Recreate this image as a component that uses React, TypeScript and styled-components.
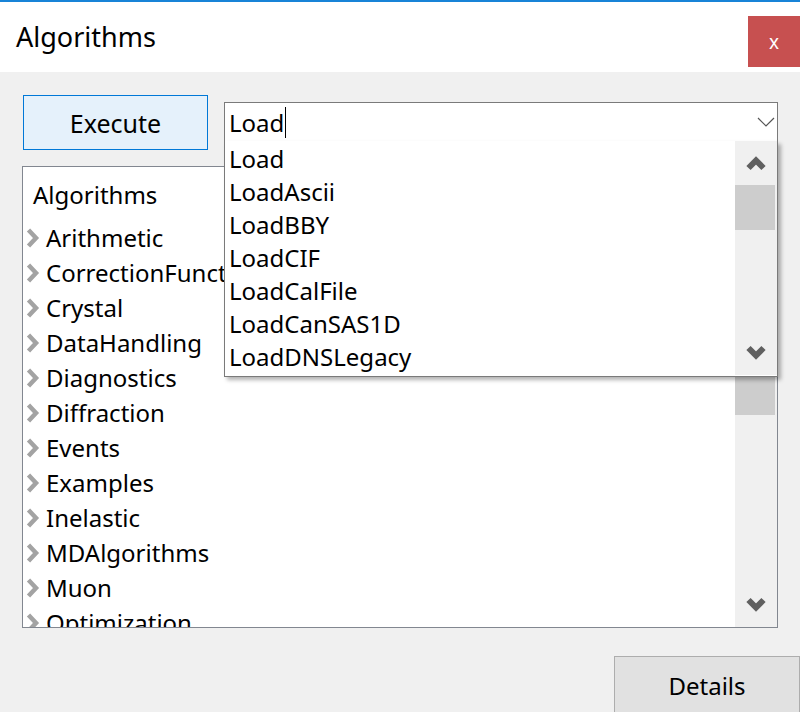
import React from "react";
import styled, { createGlobalStyle } from "styled-components";

const GlobalStyle = createGlobalStyle`
  html, body {
    margin: 0;
    padding: 0;
    background: #f0f0f0;
    font-family: "Noto Sans", "Open Sans", sans-serif;
    color: #000;
    overflow: hidden;
  }
`;

const Window = styled.div`
  width: 800px;
  height: 712px;
  display: flex;
  flex-direction: column;
  border-top: 2px solid #1883d7;
  box-sizing: border-box;
  overflow: hidden;
`;

const TitleBar = styled.div`
  height: 70px;
  background: #fff;
  display: flex;
  align-items: flex-start;
  justify-content: space-between;
  flex-shrink: 0;
`;

const Title = styled.div`
  font-size: 27px;
  padding: 16px 0 0 16px;
  line-height: 38px;
`;

const CloseButton = styled.div`
  width: 52px;
  height: 51px;
  margin-top: 14px;
  background: #c75050;
  color: #fff;
  font-size: 19px;
  display: flex;
  align-items: center;
  justify-content: center;
`;

const Body = styled.div`
  padding: 23px 22px 0 22px;
  display: flex;
  flex-direction: column;
`;

const TopRow = styled.div`
  display: flex;
  align-items: flex-start;
  gap: 16px;
  padding-left: 1px;
`;

const ExecuteButton = styled.div`
  width: 185px;
  height: 55px;
  box-sizing: border-box;
  background: #e5f1fb;
  border: 1px solid #0078d7;
  font-size: 25px;
  display: flex;
  align-items: center;
  justify-content: center;
`;

const Combo = styled.div`
  position: relative;
  margin-top: 7px;
  width: 554px;
  height: 40px;
  box-sizing: border-box;
  background: #fff;
  border: 1px solid #7a7a7a;
  display: flex;
  align-items: center;
  padding: 0 0 0 4px;
  font-size: 24px;
`;

const ComboText = styled.span`
  flex: 1;
  display: flex;
  align-items: center;
`;

const Caret = styled.span`
  display: inline-block;
  width: 1px;
  height: 31px;
  background: #000;
  margin-left: 1px;
`;

const ComboArrow = styled.svg`
  margin-right: 2px;
`;

const Popup = styled.div`
  position: absolute;
  top: 38px;
  left: -1px;
  width: 554px;
  height: 236px;
  box-sizing: border-box;
  background: #fff;
  border: 1px solid #7a7a7a;
  border-top: none;
  box-shadow: 3px 3px 4px rgba(0, 0, 0, 0.3);
  display: flex;
  z-index: 5;
`;

const PopupList = styled.div`
  flex: 1;
  padding-top: 1px;
`;

const PopupItem = styled.div`
  height: 33px;
  line-height: 33px;
  padding-left: 4px;
  font-size: 24px;
  white-space: nowrap;
`;

const ScrollBar = styled.div<{ $h: number }>`
  width: 42px;
  height: ${(p) => p.$h}px;
  background: #f0f0f0;
  display: flex;
  flex-direction: column;
  align-items: stretch;
  flex-shrink: 0;
`;

const ScrollArrow = styled.div`
  height: 44px;
  display: flex;
  align-items: center;
  justify-content: center;
  flex-shrink: 0;
`;

const Thumb = styled.div<{ $h: number }>`
  height: ${(p) => p.$h}px;
  background: #cdcdcd;
  margin-right: 2px;
`;

const Track = styled.div`
  flex: 1;
`;

const TreePanel = styled.div`
  margin-top: 16px;
  width: 756px;
  height: 462px;
  box-sizing: border-box;
  background: #fff;
  border: 1px solid #828790;
  display: flex;
  overflow: hidden;
`;

const TreeList = styled.div`
  flex: 1;
  padding-top: 10px;
`;

const TreeHeader = styled.div`
  height: 35px;
  line-height: 35px;
  padding-left: 10px;
  font-size: 24px;
  margin-bottom: 8px;
`;

const TreeRow = styled.div`
  height: 35px;
  display: flex;
  align-items: center;
  gap: 6px;
  padding-left: 2px;
  font-size: 24px;
  white-space: nowrap;
`;

const Footer = styled.div`
  display: flex;
  justify-content: flex-end;
  margin-top: 28px;
  margin-right: -22px;
`;

const DetailsButton = styled.div`
  width: 186px;
  height: 58px;
  box-sizing: border-box;
  background: #e1e1e1;
  border: 1px solid #adadad;
  font-size: 24px;
  display: flex;
  align-items: center;
  justify-content: center;
`;

const UpIcon = () => (
  <svg width="20" height="16" viewBox="0 0 20 16">
    <polyline points="2.5,13 10,5.5 17.5,13" fill="none" stroke="#606060" strokeWidth="6" />
  </svg>
);

const DownIcon = () => (
  <svg width="20" height="16" viewBox="0 0 20 16">
    <polyline points="2.5,3 10,10.5 17.5,3" fill="none" stroke="#606060" strokeWidth="6" />
  </svg>
);

const Chevron = () => (
  <svg width="15" height="20" viewBox="0 0 15 20">
    <polyline points="3.5,2 11,10 3.5,18" fill="none" stroke="#a3a3a3" strokeWidth="4.5" />
  </svg>
);

const matches = [
  "Load",
  "LoadAscii",
  "LoadBBY",
  "LoadCIF",
  "LoadCalFile",
  "LoadCanSAS1D",
  "LoadDNSLegacy",
];

const categories = [
  "Arithmetic",
  "CorrectionFunctions",
  "Crystal",
  "DataHandling",
  "Diagnostics",
  "Diffraction",
  "Events",
  "Examples",
  "Inelastic",
  "MDAlgorithms",
  "Muon",
  "Optimization",
];

export default function App() {
  return (
    <>
      <GlobalStyle />
      <Window>
        <TitleBar>
          <Title>Algorithms</Title>
          <CloseButton>x</CloseButton>
        </TitleBar>
        <Body>
          <TopRow>
            <ExecuteButton>Execute</ExecuteButton>
            <Combo>
              <ComboText>
                Load
                <Caret />
              </ComboText>
              <ComboArrow width="18" height="10" viewBox="0 0 18 10">
                <polyline points="1,1 9,9 17,1" fill="none" stroke="#555" strokeWidth="1.2" />
              </ComboArrow>
              <Popup>
                <PopupList>
                  {matches.map((m) => (
                    <PopupItem key={m}>{m}</PopupItem>
                  ))}
                </PopupList>
                <ScrollBar $h={234}>
                  <ScrollArrow>
                    <UpIcon />
                  </ScrollArrow>
                  <Thumb $h={45} />
                  <Track />
                  <ScrollArrow>
                    <DownIcon />
                  </ScrollArrow>
                </ScrollBar>
              </Popup>
            </Combo>
          </TopRow>
          <TreePanel>
            <TreeList>
              <TreeHeader>Algorithms</TreeHeader>
              {categories.map((c) => (
                <TreeRow key={c}>
                  <Chevron />
                  {c}
                </TreeRow>
              ))}
            </TreeList>
            <ScrollBar $h={460}>
              <ScrollArrow>
                <UpIcon />
              </ScrollArrow>
              <Thumb $h={204} />
              <Track />
              <ScrollArrow>
                <DownIcon />
              </ScrollArrow>
            </ScrollBar>
          </TreePanel>
          <Footer>
            <DetailsButton>Details</DetailsButton>
          </Footer>
        </Body>
      </Window>
    </>
  );
}
